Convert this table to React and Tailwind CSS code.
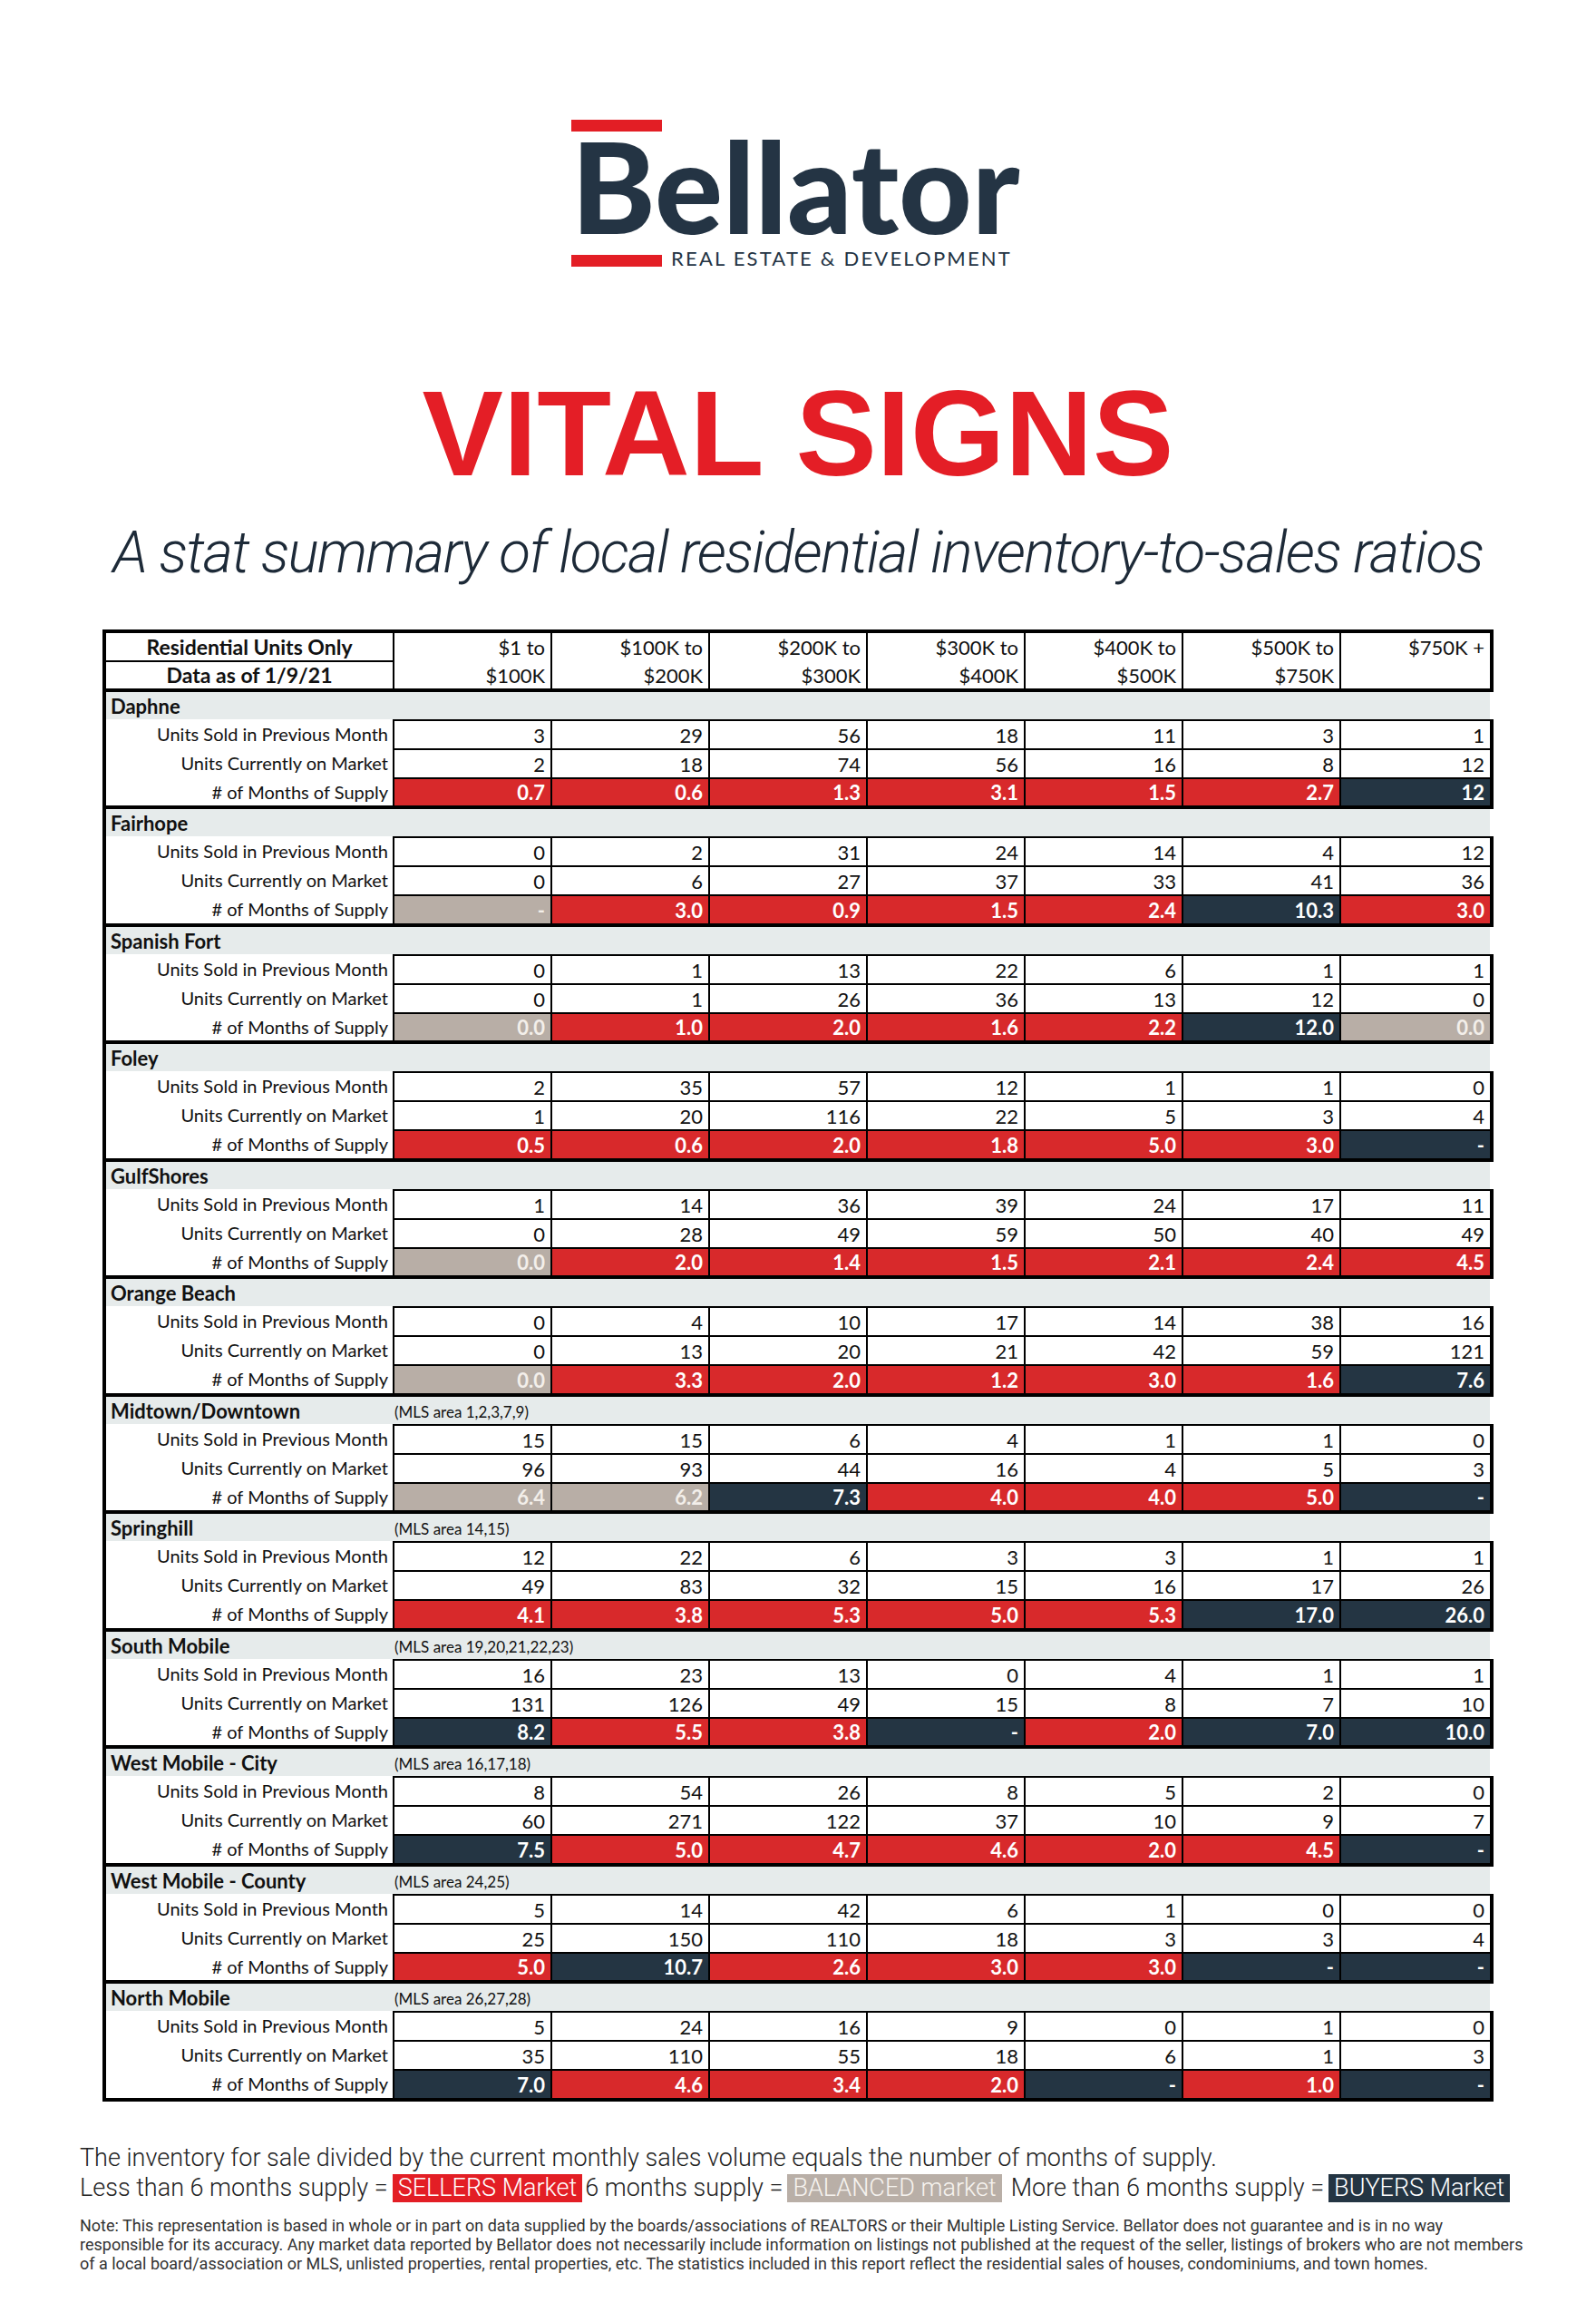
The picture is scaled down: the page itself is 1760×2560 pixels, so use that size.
const cols = [
  ["$1 to", "$100K"],
  ["$100K to", "$200K"],
  ["$200K to", "$300K"],
  ["$300K to", "$400K"],
  ["$400K to", "$500K"],
  ["$500K to", "$750K"],
  ["$750K +", ""],
];

// supply cells: value + market type (r = sellers, g = balanced, n = buyers)
const areas = [
  {
    name: "Daphne",
    sold: [3, 29, 56, 18, 11, 3, 1],
    market: [2, 18, 74, 56, 16, 8, 12],
    supply: ["0.7 r", "0.6 r", "1.3 r", "3.1 r", "1.5 r", "2.7 r", "12 n"],
  },
  {
    name: "Fairhope",
    sold: [0, 2, 31, 24, 14, 4, 12],
    market: [0, 6, 27, 37, 33, 41, 36],
    supply: ["- g", "3.0 r", "0.9 r", "1.5 r", "2.4 r", "10.3 n", "3.0 r"],
  },
  {
    name: "Spanish Fort",
    sold: [0, 1, 13, 22, 6, 1, 1],
    market: [0, 1, 26, 36, 13, 12, 0],
    supply: ["0.0 g", "1.0 r", "2.0 r", "1.6 r", "2.2 r", "12.0 n", "0.0 g"],
  },
  {
    name: "Foley",
    sold: [2, 35, 57, 12, 1, 1, 0],
    market: [1, 20, 116, 22, 5, 3, 4],
    supply: ["0.5 r", "0.6 r", "2.0 r", "1.8 r", "5.0 r", "3.0 r", "- n"],
  },
  {
    name: "GulfShores",
    sold: [1, 14, 36, 39, 24, 17, 11],
    market: [0, 28, 49, 59, 50, 40, 49],
    supply: ["0.0 g", "2.0 r", "1.4 r", "1.5 r", "2.1 r", "2.4 r", "4.5 r"],
  },
  {
    name: "Orange Beach",
    sold: [0, 4, 10, 17, 14, 38, 16],
    market: [0, 13, 20, 21, 42, 59, 121],
    supply: ["0.0 g", "3.3 r", "2.0 r", "1.2 r", "3.0 r", "1.6 r", "7.6 n"],
  },
  {
    name: "Midtown/Downtown",
    mls: "(MLS area 1,2,3,7,9)",
    sold: [15, 15, 6, 4, 1, 1, 0],
    market: [96, 93, 44, 16, 4, 5, 3],
    supply: ["6.4 g", "6.2 g", "7.3 n", "4.0 r", "4.0 r", "5.0 r", "- n"],
  },
  {
    name: "Springhill",
    mls: "(MLS area 14,15)",
    sold: [12, 22, 6, 3, 3, 1, 1],
    market: [49, 83, 32, 15, 16, 17, 26],
    supply: ["4.1 r", "3.8 r", "5.3 r", "5.0 r", "5.3 r", "17.0 n", "26.0 n"],
  },
  {
    name: "South Mobile",
    mls: "(MLS area 19,20,21,22,23)",
    sold: [16, 23, 13, 0, 4, 1, 1],
    market: [131, 126, 49, 15, 8, 7, 10],
    supply: ["8.2 n", "5.5 r", "3.8 r", "- n", "2.0 r", "7.0 n", "10.0 n"],
  },
  {
    name: "West Mobile - City",
    mls: "(MLS area 16,17,18)",
    sold: [8, 54, 26, 8, 5, 2, 0],
    market: [60, 271, 122, 37, 10, 9, 7],
    supply: ["7.5 n", "5.0 r", "4.7 r", "4.6 r", "2.0 r", "4.5 r", "- n"],
  },
  {
    name: "West Mobile - County",
    mls: "(MLS area 24,25)",
    sold: [5, 14, 42, 6, 1, 0, 0],
    market: [25, 150, 110, 18, 3, 3, 4],
    supply: ["5.0 r", "10.7 n", "2.6 r", "3.0 r", "3.0 r", "- n", "- n"],
  },
  {
    name: "North Mobile",
    mls: "(MLS area 26,27,28)",
    sold: [5, 24, 16, 9, 0, 1, 0],
    market: [35, 110, 55, 18, 6, 1, 3],
    supply: ["7.0 n", "4.6 r", "3.4 r", "2.0 r", "- n", "1.0 r", "- n"],
  },
];

const tone = {
  r: "bg-[#d8292b] text-white",
  n: "bg-[#243543] text-white",
  g: "bg-[#b8aea6] text-[#f3efea]",
};

function Cell({ i, className = "", children }) {
  return (
    <div
      className={`${i === 6 ? "flex-1" : "w-[174px]"} border-l-2 border-t-2 border-black flex items-center justify-end pr-[6px] ${className}`}
    >
      {children}
    </div>
  );
}

function DataRow({ label, values }) {
  return (
    <div className="flex h-[32px] border-r-4 border-black">
      <div className="w-[316px] flex items-center justify-end pr-[5px] text-[20px]">{label}</div>
      {values.map((v, i) => (
        <Cell key={i} i={i} className="text-[22px]">
          {v}
        </Cell>
      ))}
    </div>
  );
}

function Area({ a, tall }) {
  return (
    <div className="border-b-4 border-black">
      <div className="h-[30px] bg-[#e6ebeb] border-r-4 border-white flex items-center">
        <div className="w-[318px] pl-[5px] text-[22px] font-bold">{a.name}</div>
        {a.mls && <div className="text-[17px] pt-[3px]">{a.mls}</div>}
      </div>
      <DataRow label="Units Sold in Previous Month" values={a.sold} />
      <DataRow label="Units Currently on Market" values={a.market} />
      <div className={`flex ${tall ? "h-[32px]" : "h-[31px]"} border-r-4 border-black`}>
        <div className="w-[316px] flex items-center justify-end pr-[5px] text-[20px]"># of Months of Supply</div>
        {a.supply.map((s, i) => {
          const [v, t] = s.split(" ");
          return (
            <Cell key={i} i={i} className={`text-[22px] font-bold ${tone[t]}`}>
              {v}
            </Cell>
          );
        })}
      </div>
    </div>
  );
}

function Badge({ className, children }) {
  return <span className={`ml-[5px] px-[6px] leading-[31px] ${className}`}>{children}</span>;
}

export default function App() {
  return (
    <div className="w-[1760px] min-h-[2560px] bg-white pt-[132px] text-black">
      {/* logo */}
      <div className="flex justify-center">
        <div className="w-[500px] text-[#243444]">
          <div className="w-[100px] h-[13px] bg-[#e31e25]" />
          <div className="mt-[-11px] text-[140px] leading-none font-black whitespace-nowrap [font-family:Lato,sans-serif]">
            Bellator
          </div>
          <div className="mt-[2px] h-[18px] flex items-end">
            <div className="w-[100px] h-[13px] bg-[#e31e25]" />
            <div className="ml-[10px] text-[22px] leading-[18px] tracking-[0.1em] whitespace-nowrap [font-family:Lato,sans-serif]">
              REAL ESTATE &amp; DEVELOPMENT
            </div>
          </div>
        </div>
      </div>

      <h1 className="mt-[117px] text-center text-[134px] leading-none font-bold text-[#e41e26] [font-family:'Liberation_Sans',Arial,sans-serif]">
        VITAL SIGNS
      </h1>
      <p className="mt-[33px] text-center text-[64px] leading-none italic font-light tracking-[-1.6px] text-[#1d2a38] [font-family:Roboto,sans-serif]">
        A stat summary of local residential inventory-to-sales ratios
      </p>

      {/* table */}
      <div className="mt-[52px] ml-[113px] w-[1534px] border-l-4 border-t-4 border-black text-[#111] [font-family:Lato,sans-serif]">
        <div className="flex border-b-4 border-r-4 border-black">
          <div className="w-[316px] text-[23px] font-bold">
            <div className="h-[32px] border-b-2 border-black flex items-center justify-center">Residential Units Only</div>
            <div className="h-[29px] flex items-center justify-center">Data as of 1/9/21</div>
          </div>
          {cols.map(([a, b], i) => (
            <div key={i} className={`${i === 6 ? "flex-1" : "w-[174px]"} border-l-2 border-black text-[22px] pr-[6px] text-right`}>
              <div className="h-[32px] leading-[32px]">{a}</div>
              <div className="h-[29px] leading-[29px]">{b}</div>
            </div>
          ))}
        </div>
        {areas.map((a, i) => (
          <Area key={a.name} a={a} tall={i % 2 === 1} />
        ))}
      </div>

      {/* footer */}
      <div className="mt-[46px] ml-[88px] text-[#222] [font-family:Roboto,sans-serif] font-light">
        <div className="text-[27px] leading-[33px] whitespace-nowrap">
          The inventory for sale divided by the current monthly sales volume equals the number of months of supply.
        </div>
        <div className="text-[27px] leading-[33px] whitespace-nowrap flex items-center">
          <span>Less than 6 months supply =</span>
          <Badge className="bg-[#e31e25] text-white">SELLERS Market</Badge>
          <span className="ml-[3px]">6 months supply =</span>
          <Badge className="bg-[#b9afa7] text-[#f6f3ef]">BALANCED market</Badge>
          <span className="ml-[10px]">More than 6 months supply =</span>
          <Badge className="bg-[#243543] text-white">BUYERS Market</Badge>
        </div>
        <div className="mt-[14px] text-[18px] leading-[21px] font-normal text-[#333] whitespace-nowrap">
          <div>
            Note: This representation is based in whole or in part on data supplied by the boards/associations of REALTORS or their Multiple Listing Service. Bellator does not guarantee and is in no way
          </div>
          <div>
            responsible for its accuracy. Any market data reported by Bellator does not necessarily include information on listings not published at the request of the seller, listings of brokers who are not members
          </div>
          <div>
            of a local board/association or MLS, unlisted properties, rental properties, etc. The statistics included in this report reflect the residential sales of houses, condominiums, and town homes.
          </div>
        </div>
      </div>
    </div>
  );
}
